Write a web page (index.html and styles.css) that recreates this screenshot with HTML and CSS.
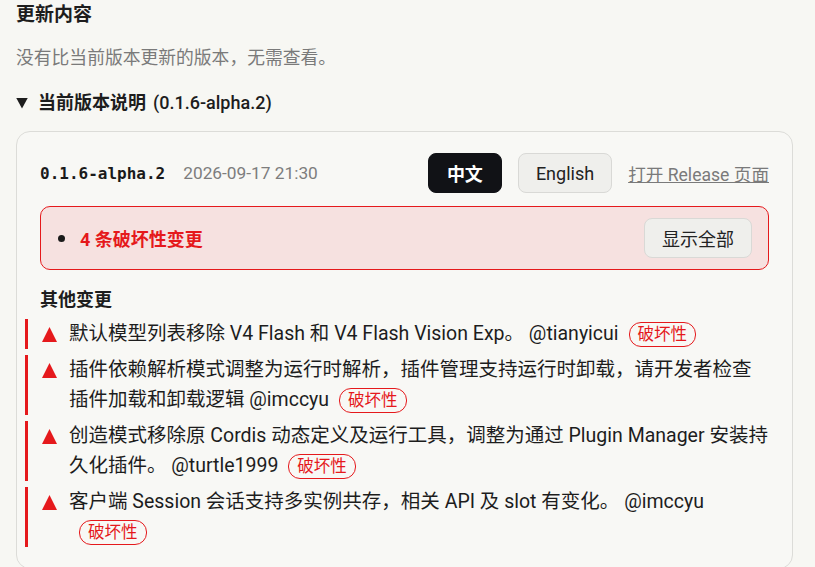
FILE: index.html
```html
<!DOCTYPE html>
<html lang="zh-CN">
<head>
    <meta charset="UTF-8">
    <meta name="viewport" content="width=device-width, initial-scale=1">
    <title>更新内容</title>
    <link rel="stylesheet" href="styles.css">
</head>
<body>
    <h2 class="title">更新内容</h2>
    <p class="muted">没有比当前版本更新的版本，无需查看。</p>

    <details class="notes" open>
        <summary>当前版本说明 <span class="ver">(0.1.6-alpha.2)</span></summary>

        <div class="card">
            <div class="card-head">
                <code class="tag">0.1.6-alpha.2</code>
                <span class="date">2026-09-17 21:30</span>
                <div class="actions">
                    <button class="btn btn-dark">中文</button>
                    <button class="btn">English</button>
                    <a class="release-link" href="#">打开 Release 页面</a>
                </div>
            </div>

            <div class="alert">
                <span class="dot"></span>
                <span class="alert-text">4 条破坏性变更</span>
                <button class="btn">显示全部</button>
            </div>

            <h3 class="section">其他变更</h3>
            <ul class="changes">
                <li>
                    <span class="mark"></span>
                    <span>默认模型列表移除 V4 Flash 和 V4 Flash Vision Exp。 @tianyicui<span class="badge">破坏性</span></span>
                </li>
                <li>
                    <span class="mark"></span>
                    <span>插件依赖解析模式调整为运行时解析，插件管理支持运行时卸载，请开发者检查插件加载和卸载逻辑 @imccyu<span class="badge">破坏性</span></span>
                </li>
                <li>
                    <span class="mark"></span>
                    <span>创造模式移除原 Cordis 动态定义及运行工具，调整为通过 Plugin Manager 安装持久化插件。 @turtle1999<span class="badge">破坏性</span></span>
                </li>
                <li>
                    <span class="mark"></span>
                    <span>客户端 Session 会话支持多实例共存，相关 API 及 slot 有变化。 @imccyu<span class="badge">破坏性</span></span>
                </li>
            </ul>
        </div>
    </details>
</body>
</html>
```

FILE: styles.css
```css
body {
    margin: 0;
    padding: 0 22px 0 16px;
    background-color: #f7f7f3;
    color: #1d1d1d;
    font-family: Roboto, "Noto Sans CJK SC", sans-serif;
    font-size: 18px;
}
.title {
    margin: 0;
    font-size: 19px;
    line-height: 30px;
    font-weight: bold;
}
.muted {
    margin: 14px 0 0;
    font-size: 17.8px;
    line-height: 28px;
    color: #7a7a7a;
}
.notes summary {
    display: flex;
    align-items: center;
    margin-top: 17px;
    font-size: 18px;
    line-height: 28px;
    font-weight: bold;
    cursor: pointer;
    list-style: none;
}
.notes summary::-webkit-details-marker {
    display: none;
}
/* open/closed triangle in front of the summary */
.notes summary::before {
    content: "";
    width: 12px;
    height: 11px;
    margin-right: 10px;
    background-color: #1d1d1d;
    clip-path: polygon(0 0, 100% 0, 50% 100%);
}
.notes .ver {
    margin-left: 7px;
    font-weight: 500;
}
.card {
    margin-top: 14px;
    border: 1px solid #dcdcd8;
    border-radius: 14px;
    background-color: #f8f8f5;
    padding: 21px 23px 21px 23px;
}
.card-head {
    display: flex;
    align-items: center;
    height: 40px;
}
.tag {
    font-family: "DejaVu Sans Mono", monospace;
    font-weight: bold;
    font-size: 16px;
    color: #1a1a1a;
}
.date {
    margin-left: 18px;
    font-size: 17.3px;
    color: #7d7d7d;
}
.actions {
    margin-left: auto;
    display: flex;
    align-items: center;
    gap: 16px;
}
.btn {
    height: 40px;
    padding: 0 17px;
    border: 1px solid #d9d9d6;
    border-radius: 8px;
    background-color: #efefec;
    color: #222;
    font-family: inherit;
    font-size: 18px;
}
.btn-dark {
    padding: 0 18px;
    background-color: #111216;
    border-color: #111216;
    color: white;
    font-weight: bold;
}
.release-link {
    color: #7a7a7a;
    font-size: 17.6px;
    text-decoration: underline;
}
.alert {
    margin-top: 13px;
    display: flex;
    align-items: center;
    padding: 11px 16px 11px 17px;
    border: 1px solid #e5191c;
    border-radius: 10px;
    background-color: #f6e1e0;
}
.dot {
    width: 7px;
    height: 7px;
    border-radius: 50%;
    background-color: #1a1a1a;
    margin-right: 15px;
}
.alert-text {
    color: #e5191c;
    font-weight: bold;
}
.alert .btn {
    margin-left: auto;
}
.section {
    margin: 16px 0 5px;
    font-size: 18px;
    line-height: 28px;
}
.changes {
    list-style: none;
    margin: 0 0 0 -15px;
    padding: 0;
    display: flex;
    flex-direction: column;
    gap: 6px;
}
.changes li {
    display: flex;
    align-items: flex-start;
    border-left: 3px solid #e5191c;
    padding-left: 14px;
    font-size: 19.5px;
    line-height: 30px;
}
.mark {
    flex: none;
    width: 15px;
    height: 15px;
    margin: 8px 12px 0 0;
    background-color: #e5191c;
    clip-path: polygon(50% 0, 100% 100%, 0 100%);
}
.badge {
    display: inline-block;
    margin-left: 10px;
    padding: 0 8px;
    border: 1px solid #e5191c;
    border-radius: 12px;
    color: #e5191c;
    font-size: 16.5px;
    line-height: 23px;
}
```
